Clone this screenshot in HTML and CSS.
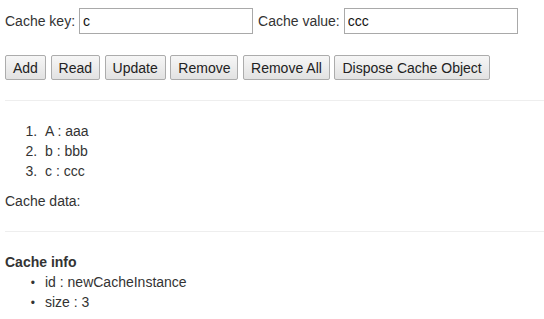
FILE: index.html
```html
<!DOCTYPE html>
<html>
<head>
<meta charset="utf-8">
<link rel="stylesheet" href="styles.css">
</head>
<body>
<div class="page">
  <div class="fields">
    <label class="field-label">Cache key:</label>
    <input class="field" type="text" value="c">
    <label class="field-label second">Cache value:</label>
    <input class="field" type="text" value="ccc">
  </div>
  <div class="actions">
    <button class="btn">Add</button>
    <button class="btn">Read</button>
    <button class="btn">Update</button>
    <button class="btn">Remove</button>
    <button class="btn">Remove All</button>
    <button class="btn">Dispose Cache Object</button>
  </div>
  <hr class="rule">
  <ol class="items">
    <li>A : aaa</li>
    <li>b : bbb</li>
    <li>c : ccc</li>
  </ol>
  <p class="data">Cache data:</p>
  <hr class="rule">
  <div class="info-title">Cache info</div>
  <ul class="info">
    <li>id : newCacheInstance</li>
    <li>size : 3</li>
  </ul>
</div>
</body>
</html>
```
FILE: styles.css
```css
html, body {
  margin: 0;
  padding: 0;
  background: #fff;
}
body {
  font-family: "Liberation Sans", Arial, sans-serif;
  font-size: 14px;
  line-height: 20px;
  color: #333;
}
.page {
  padding-left: 5px;
}
.fields {
  display: flex;
  align-items: center;
  padding-top: 8px;
  height: 26px;
}
.field-label {
  margin-right: 4px;
}
.field-label.second {
  margin-left: 5px;
}
.field {
  box-sizing: border-box;
  width: 174px;
  height: 26px;
  border: 1px solid #a9a9a9;
  padding: 0 3px;
  margin: 0;
  font-family: "Liberation Sans", Arial, sans-serif;
  font-size: 14px;
  color: #111;
  outline: none;
}
.actions {
  display: flex;
  gap: 4.6px;
  margin-top: 21px;
}
.btn {
  box-sizing: border-box;
  height: 25px;
  margin: 0;
  padding: 0 7px;
  border: 1px solid #acacac;
  border-radius: 2px;
  background: linear-gradient(#f6f6f6, #e2e2e2);
  font-family: "Liberation Sans", Arial, sans-serif;
  font-size: 14px;
  color: #222;
}
.rule {
  border: 0;
  border-top: 1px solid #eee;
  margin: 20px 0;
  height: 0;
}
.items, .info {
  margin: 0 0 10px;
  padding-left: 40px;
}
.items li::marker {
  content: counter(list-item) ".\00a0\00a0";
}
.info li::marker {
  content: "\2022\00a0\00a0\00a0";
  font-size: 12px;
}
.data {
  margin: 0 0 10px;
}
.info-title {
  font-weight: bold;
}
```
